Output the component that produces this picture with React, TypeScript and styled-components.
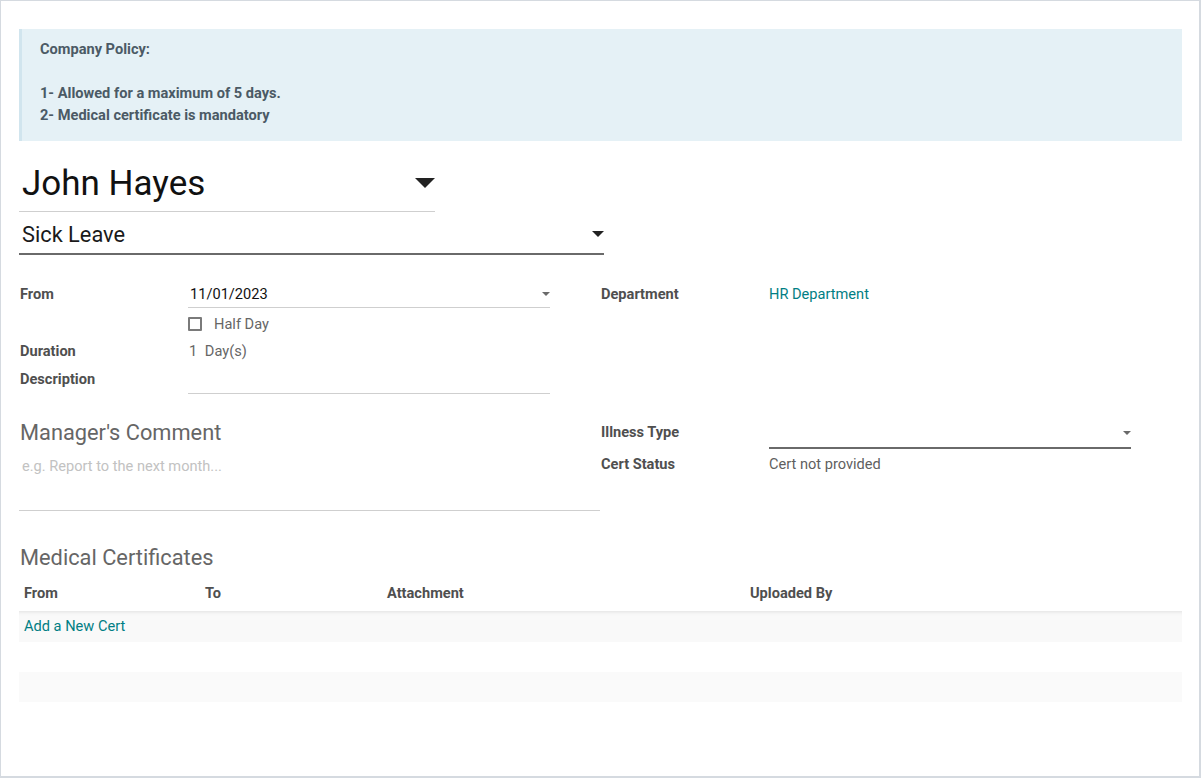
import styled, { createGlobalStyle } from 'styled-components';

const GlobalStyle = createGlobalStyle`
  html, body {
    margin: 0;
    padding: 0;
    background: #ffffff;
  }
  body {
    font-family: Roboto, "Noto Sans", "Liberation Sans", sans-serif;
    font-size: 14.6px;
    color: #4c4c4c;
  }
  * {
    box-sizing: border-box;
  }
`;

/* ── Sheet ── */
const Sheet = styled.div`
  width: 1201px;
  height: 778px;
  border: 1px solid #d5dae0;
  border-right-width: 2px;
  border-bottom-width: 2px;
  padding: 28px 17px 0 18px;
  background: #ffffff;
  display: flex;
  flex-direction: column;
`;

const PolicyAlert = styled.div`
  height: 112px;
  background: #e5f1f6;
  border-left: 3px solid #d1e5ee;
  padding: 9px 18px 0 18px;
  color: #4b5a65;
  font-weight: 700;
  font-size: 14.6px;
  line-height: 22px;
`;

const PolicyLine = styled.div`
  min-height: 22px;
`;

/* ── Title fields ── */
const NameField = styled.div`
  margin-top: 20px;
  width: 416px;
  height: 51px;
  padding: 0 0 6px 3px;
  border-bottom: 1px solid #cfcfcf;
  display: flex;
  align-items: center;
  justify-content: space-between;
`;

const NameText = styled.span`
  font-size: 35px;
  color: #111111;
  line-height: 1;
`;

const Caret = styled.span<{ $w: number; $h: number; $color: string }>`
  width: 0;
  height: 0;
  border-left: ${p => p.$w / 2}px solid transparent;
  border-right: ${p => p.$w / 2}px solid transparent;
  border-top: ${p => p.$h}px solid ${p => p.$color};
  flex-shrink: 0;
`;

const TypeField = styled.div`
  width: 585px;
  height: 43px;
  padding: 3px 0 0 3px;
  border-bottom: 2px solid #6a6a6a;
  display: flex;
  align-items: center;
  justify-content: space-between;
`;

const TypeText = styled.span`
  font-size: 21.8px;
  color: #1a1a1a;
`;

/* ── Groups ── */
const Columns = styled.div<{ $top: number }>`
  margin-top: ${p => p.$top}px;
  display: grid;
  grid-template-columns: 581px 1fr;
  align-items: start;
`;

const FieldGrid = styled.div`
  display: grid;
  grid-template-columns: 169px 362px;
`;

const Label = styled.div<{ $h: number; $lift?: number }>`
  height: ${p => p.$h}px;
  display: flex;
  align-items: center;
  padding-left: 1px;
  padding-bottom: ${p => p.$lift ?? 0}px;
  font-weight: 700;
  color: #4f4f4f;
`;

const Value = styled.div<{ $h: number; $line?: 'thin' | 'thick'; $color?: string }>`
  height: ${p => p.$h}px;
  display: flex;
  align-items: center;
  justify-content: space-between;
  color: ${p => p.$color ?? '#5f5f5f'};
  border-bottom: ${p =>
    p.$line === 'thin' ? '1px solid #cfcfcf' : p.$line === 'thick' ? '2px solid #6a6a6a' : 'none'};
`;

const DateText = styled.span`
  color: #111111;
  padding-left: 2px;
`;

const CheckRow = styled.div`
  display: flex;
  align-items: center;
  gap: 12px;
  padding-top: 2px;
  color: #666666;
`;

const CheckBox = styled.span`
  width: 14px;
  height: 14px;
  border: 2px solid #7a7a7a;
  border-radius: 1px;
  background: #ffffff;
`;

const Duration = styled.span`
  padding-left: 1px;
  word-spacing: 4px;
  color: #666666;
`;

const DepartmentLink = styled.span`
  color: #017e84;
`;

/* ── Manager's comment ── */
const CommentBlock = styled.div`
  display: flex;
  flex-direction: column;
`;

const SectionTitle = styled.div`
  font-size: 21.8px;
  line-height: 24px;
  color: #666666;
  padding-left: 1px;
`;

const CommentArea = styled.div`
  margin-top: 11px;
  height: 55px;
  border-bottom: 1px solid #cfcfcf;
  padding-left: 3px;
  color: #c2c2c2;
  line-height: 21px;
`;

const RightGroup = styled.div`
  margin-top: -3px;
`;

/* ── Certificates table ── */
const CertSection = styled.div`
  margin-top: 35px;
  display: flex;
  flex-direction: column;
`;

const CertTable = styled.div`
  margin-top: 8px;
  display: flex;
  flex-direction: column;
`;

const TableRow = styled.div<{ $bg?: string; $shadow?: boolean }>`
  height: ${p => (p.$shadow ? 31 : 30)}px;
  display: grid;
  grid-template-columns: 181px 182px 363px 1fr;
  align-items: center;
  background: ${p => p.$bg ?? '#ffffff'};
  box-shadow: ${p => (p.$shadow ? 'inset 0 5px 5px -5px rgba(0, 0, 0, 0.14)' : 'none')};
`;

const HeaderRow = styled(TableRow)`
  height: 33px;
  padding-bottom: 3px;
`;

const HeadCell = styled.div`
  padding-left: 5px;
  font-weight: 700;
  color: #4f4f4f;
`;

const AddLink = styled.div`
  padding-left: 5px;
  padding-bottom: 1px;
  color: #017e84;
  grid-column: 1 / span 2;
`;

export default function App() {
  return (
    <>
      <GlobalStyle />
      <Sheet>
        <PolicyAlert>
          <PolicyLine>Company Policy:</PolicyLine>
          <PolicyLine />
          <PolicyLine>1- Allowed for a maximum of 5 days.</PolicyLine>
          <PolicyLine>2- Medical certificate is mandatory</PolicyLine>
        </PolicyAlert>

        <NameField>
          <NameText>John Hayes</NameText>
          <Caret $w={21} $h={10} $color="#222222" />
        </NameField>

        <TypeField>
          <TypeText>Sick Leave</TypeText>
          <Caret $w={13} $h={6} $color="#222222" />
        </TypeField>

        <Columns $top={25}>
          <FieldGrid>
            <Label $h={28} $lift={1}>From</Label>
            <Value $h={28} $line="thin">
              <DateText>11/01/2023</DateText>
              <Caret $w={9} $h={4} $color="#6a6a6a" />
            </Value>

            <Label $h={30} />
            <Value $h={30}>
              <CheckRow>
                <CheckBox />
                Half Day
              </CheckRow>
            </Value>

            <Label $h={26}>Duration</Label>
            <Value $h={26}>
              <Duration>1 Day(s)</Duration>
            </Value>

            <Label $h={30}>Description</Label>
            <Value $h={30} $line="thin" />
          </FieldGrid>

          <FieldGrid>
            <Label $h={28} $lift={1}>Department</Label>
            <Value $h={28}>
              <DepartmentLink>HR Department</DepartmentLink>
            </Value>
          </FieldGrid>
        </Columns>

        <Columns $top={27}>
          <CommentBlock>
            <SectionTitle>Manager's Comment</SectionTitle>
            <CommentArea>e.g. Report to the next month...</CommentArea>
          </CommentBlock>

          <RightGroup>
            <FieldGrid>
              <Label $h={31} $lift={4}>Illness Type</Label>
              <Value $h={31} $line="thick">
                <span />
                <Caret $w={9} $h={4} $color="#6a6a6a" />
              </Value>

              <Label $h={30}>Cert Status</Label>
              <Value $h={30}>Cert not provided</Value>
            </FieldGrid>
          </RightGroup>
        </Columns>

        <CertSection>
          <SectionTitle>Medical Certificates</SectionTitle>
          <CertTable>
            <HeaderRow>
              <HeadCell>From</HeadCell>
              <HeadCell>To</HeadCell>
              <HeadCell>Attachment</HeadCell>
              <HeadCell>Uploaded By</HeadCell>
            </HeaderRow>
            <TableRow $bg="#f9f9f9" $shadow>
              <AddLink>Add a New Cert</AddLink>
            </TableRow>
            <TableRow />
            <TableRow $bg="#fafafa" />
          </CertTable>
        </CertSection>
      </Sheet>
    </>
  );
}
